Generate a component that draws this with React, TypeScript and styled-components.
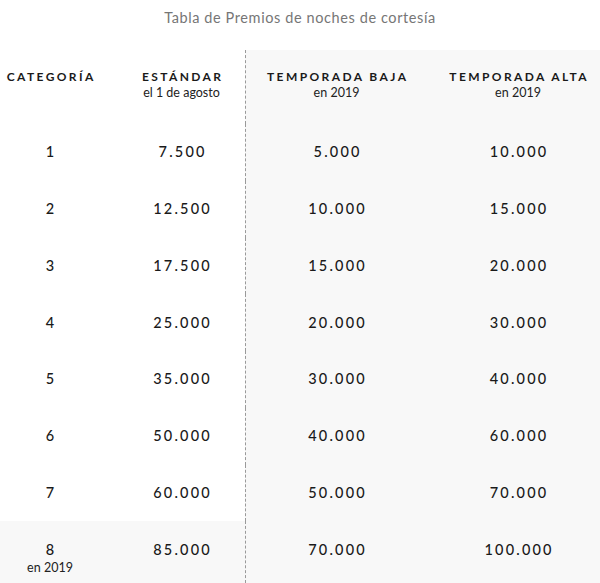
import React from "react";
import styled, { createGlobalStyle } from "styled-components";

const rows: { cat: string; note?: string; std: string; low: string; high: string }[] = [
    { cat: "1", std: "7.500", low: "5.000", high: "10.000" },
    { cat: "2", std: "12.500", low: "10.000", high: "15.000" },
    { cat: "3", std: "17.500", low: "15.000", high: "20.000" },
    { cat: "4", std: "25.000", low: "20.000", high: "30.000" },
    { cat: "5", std: "35.000", low: "30.000", high: "40.000" },
    { cat: "6", std: "50.000", low: "40.000", high: "60.000" },
    { cat: "7", std: "60.000", low: "50.000", high: "70.000" },
    { cat: "8", note: "en 2019", std: "85.000", low: "70.000", high: "100.000" },
];

export default function App() {
    return (
        <>
            <GlobalStyle />
            <Page>
                <Title>Tabla de Premios de noches de cortesía</Title>
                <Table>
                    <HeadCell>
                        <HeadLabel>Categoría</HeadLabel>
                    </HeadCell>
                    <HeadCell $shift>
                        <HeadLabel>Estándar</HeadLabel>
                        <Sub>el 1 de agosto</Sub>
                    </HeadCell>
                    <HeadCell $season $divider>
                        <HeadLabel>Temporada baja</HeadLabel>
                        <Sub>en 2019</Sub>
                    </HeadCell>
                    <HeadCell $season>
                        <HeadLabel>Temporada alta</HeadLabel>
                        <Sub>en 2019</Sub>
                    </HeadCell>
                    {rows.map((r) => {
                        const last = !!r.note;
                        return (
                            <React.Fragment key={r.cat}>
                                <Cell $last={last} $shade={last}>
                                    <Value>{r.cat}</Value>
                                    {r.note && <Sub>{r.note}</Sub>}
                                </Cell>
                                <Cell $last={last} $shade={last} $shift>
                                    <Value>{r.std}</Value>
                                </Cell>
                                <Cell $last={last} $season $divider>
                                    <Value>{r.low}</Value>
                                </Cell>
                                <Cell $last={last} $season>
                                    <Value>{r.high}</Value>
                                </Cell>
                            </React.Fragment>
                        );
                    })}
                </Table>
            </Page>
        </>
    );
}

const GlobalStyle = createGlobalStyle`
    html, body {
        margin: 0;
        padding: 0;
        background: #ffffff;
        overflow: hidden;
    }
    body {
        font-family: Lato, "Noto Sans", sans-serif;
        color: #1a1a1a;
    }
`;

const Page = styled.div`
    width: 600px;
    height: 583px;
    overflow: hidden;
`;

const Title = styled.div`
    height: 50px;
    padding-top: 9px;
    box-sizing: border-box;
    text-align: center;
    font-size: 14.5px;
    letter-spacing: 0.6px;
    color: #767676;
`;

const Table = styled.div`
    display: grid;
    width: 609px;
    grid-template-columns: 100px 145px 182px 182px;
    grid-template-rows: 74px repeat(7, 56.75px) 62px;
`;

const HeadCell = styled.div<{ $shift?: boolean; $season?: boolean; $divider?: boolean }>`
    display: flex;
    flex-direction: column;
    align-items: center;
    padding-top: 19px;
    padding-left: ${(p) => (p.$shift ? "18px" : "0")};
    background: ${(p) => (p.$season ? "#f8f8f8" : "transparent")};
    border-left: ${(p) => (p.$divider ? "1px dashed #9a9a9a" : "none")};
`;

const Cell = styled.div<{ $shift?: boolean; $season?: boolean; $divider?: boolean; $shade?: boolean; $last?: boolean }>`
    display: flex;
    flex-direction: column;
    align-items: center;
    justify-content: ${(p) => (p.$last ? "flex-start" : "center")};
    padding-top: ${(p) => (p.$last ? "19px" : "0")};
    padding-left: ${(p) => (p.$shift ? "18px" : "0")};
    background: ${(p) => (p.$season || p.$shade ? "#f8f8f8" : "transparent")};
    border-left: ${(p) => (p.$divider ? "1px dashed #9a9a9a" : "none")};
`;

const HeadLabel = styled.div`
    font-size: 12px;
    font-weight: 700;
    letter-spacing: 2.4px;
    text-transform: uppercase;
    line-height: 16px;
    margin-right: -2.4px;
`;

const Sub = styled.div`
    font-size: 12.5px;
    line-height: 16px;
    color: #222222;
`;

const Value = styled.div`
    font-size: 14.5px;
    font-weight: 500;
    letter-spacing: 2.2px;
    line-height: 20px;
    margin-right: -2.2px;
`;
